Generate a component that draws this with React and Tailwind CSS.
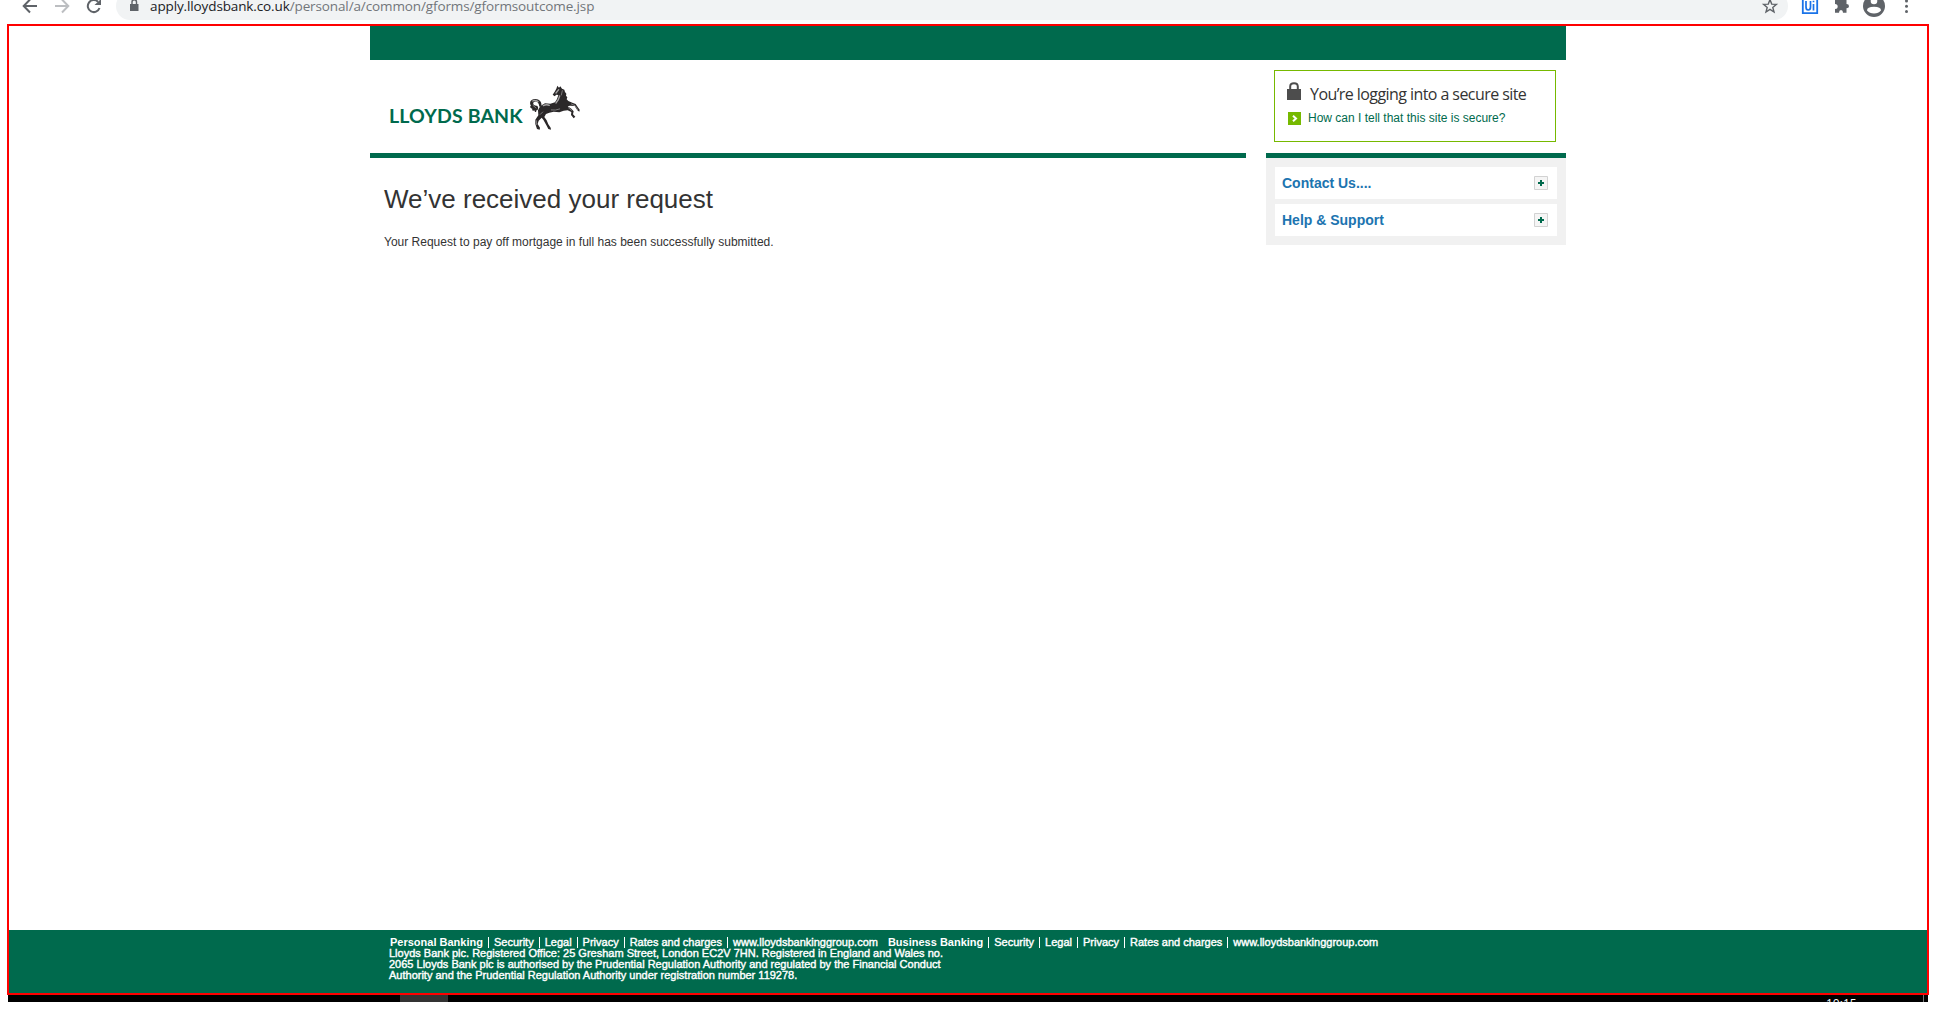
function Horse() {
  return (
    <svg viewBox="0 0 192 162" className="h-[54px] w-[64px]" aria-hidden="true">
      <g fill="#2b2829">
        <path d="M109 26 L112 17 L117 23 L121 19 L126 26 L133 29 L135 36 L139 41 L138 47 L142 52 L140 58 L145 63 L157 68 L167 72 L173 81 L179 89 L178 95 L172 91 L164 78 L150 77 L143 79 L154 86 L161 94 L159 103 L166 110 L161 115 L153 105 L154 96 L143 91 L131 92 L118 97 L101 95 L88 98 L78 102 L73 111 L80 121 L85 133 L92 143 L93 149 L85 147 L80 137 L70 119 L65 113 L56 122 L53 132 L60 143 L59 149 L51 147 L46 132 L46 119 L55 106 L54 91 L61 78 L75 70 L91 71 L105 67 L111 57 L115 45 L109 44 L104 49 L98 44 L104 35 Z" />
        <path d="M64 78 C67 65 56 56 45 57 C31 58 27 68 33 78 C27 79 32 85 37 86 C35 91 40 94 43 91 C44 98 50 98 49 91 C56 91 56 80 51 77 C43 79 37 72 41 67 C47 61 57 65 58 80 Z" />
      </g>
      <g fill="none" stroke="#a5a3a4" strokeLinecap="round">
        <path d="M38 63 Q45 59 54 65 M116 29 L108 39" strokeWidth="4" />
        <path d="M119 48 Q116 61 108 69 M70 77 Q79 72 88 76" strokeWidth="4" />
        <path d="M94 90 Q106 92 119 87 M154 72 L165 77 L173 89 M49 122 L50 134 M61 103 L68 96 M145 83 L155 91" strokeWidth="2" />
        <path d="M127 32 L124 45 M39 76 L48 84" strokeWidth="2" />
      </g>
    </svg>
  );
}

function BrowserBar() {
  return (
    <div className="flex h-6 shrink-0 items-start overflow-hidden">
      <svg className="h-6 w-[116px] shrink-0" viewBox="0 0 116 24" fill="none" strokeWidth="2">
        <path d="M37 6 H24 M30 -0.5 L23.7 6 L30 12.5" stroke="#5f6368" />
        <path d="M55 6 H68 M62 -0.5 L68.3 6 L62 12.5" stroke="#bcbec1" />
        <path d="M99.5 8 A6 6 0 1 1 98 1.8" stroke="#5f6368" />
        <path d="M101 -1 V5 H94.5 Z" fill="#5f6368" />
      </svg>
      <div className="-mt-2 flex h-7 w-[1672px] shrink-0 items-start rounded-full bg-[#f1f3f4] pt-2">
        <svg className="ml-[13px] h-3 w-[11px]" viewBox="0 0 11 12">
          <path d="M1 4 H9.5 V11 H1 Z" fill="#5f6368" />
          <path d="M3 4 V2 A2.2 2.2 0 0 1 7.5 2 V4" fill="none" stroke="#5f6368" strokeWidth="1.4" />
        </svg>
        <div className="ml-[10px] -mt-[3px] whitespace-nowrap font-['Open_Sans','Noto_Sans',sans-serif] text-[13.5px] leading-[19px] tracking-[-0.12px] text-[#72767a]">
          <span className="text-[#202124]">apply.lloydsbank.co.uk</span>/personal/a/common/gforms/gformsoutcome.jsp
        </div>
      </div>
      <svg className="-ml-[28px] h-6 w-[176px] shrink-0" viewBox="1760 0 176 24">
        <path d="M1770 -0.5 L1771.7 4.1 L1776.4 4.4 L1772.8 7.4 L1774 12 L1770 9.4 L1766 12 L1767.2 7.4 L1763.6 4.4 L1768.3 4.1 Z" fill="none" stroke="#5f6368" strokeWidth="1.4" />
        <path d="M1802.8 -3 H1817.2 V13.2 H1802.8 Z" fill="#fff" stroke="#1a73e8" strokeWidth="1.8" />
        <path d="M1806 1 V7 Q1806 10 1808.2 10 Q1810.5 10 1810.5 7 V1 M1813.5 4 V10.5 M1813.5 0.7 V2.2" fill="none" stroke="#1a73e8" strokeWidth="1.7" />
        <path d="M1835 0 H1839 Q1839 -2 1841 -2 Q1843 -2 1843 0 H1846.5 V4 Q1849 4 1849 6.2 Q1849 8.3 1846.5 8.3 V12.7 H1843 Q1843 10 1841 10 Q1839 10 1839 12.7 H1835 V9 Q1837.7 9 1837.7 6.5 Q1837.7 4 1835 4 Z" fill="#5f6368" />
        <circle cx="1874" cy="6" r="11" fill="#5f6368" />
        <circle cx="1874" cy="1" r="3.3" fill="#fff" />
        <path d="M1867 10.5 Q1867 6.8 1874 6.8 Q1881 6.8 1881 10.5 Q1878.5 13.4 1874 13.4 Q1869.5 13.4 1867 10.5" fill="#fff" />
        <g fill="#5f6368"><circle cx="1906.5" cy="1" r="1.5" /><circle cx="1906.5" cy="6.2" r="1.5" /><circle cx="1906.5" cy="11.4" r="1.5" /></g>
      </svg>
    </div>
  );
}

function SecureBox() {
  return (
    <div className="ml-2 h-[72px] w-[282px] border border-[#76b900] pl-3 pt-[11px]">
      <div className="flex h-[18px] items-start">
        <svg className="h-[18px] w-[14px]" viewBox="0 0 14 18">
          <path d="M0 7 H14 V18 H0 Z" fill="#4d4d4d" />
          <path d="M3.2 8 V4.5 Q3.2 1.2 7 1.2 Q10.8 1.2 10.8 4.5 V8" fill="none" stroke="#4d4d4d" strokeWidth="2" />
        </svg>
        <p className="ml-[9px] whitespace-nowrap font-['Open_Sans',sans-serif] text-[16px] leading-6 tracking-[-0.57px] text-[#333]">You’re logging into a secure site</p>
      </div>
      <div className="mt-3 flex h-[13px] items-start">
        <svg className="ml-px h-[13px] w-[13px]" viewBox="0 0 13 13">
          <path d="M0 0 H13 V13 H0 Z" fill="#76b900" />
          <path d="M5 3.8 L8 6.5 L5 9.2" fill="none" stroke="#fff" strokeWidth="2" />
        </svg>
        <a className="-mt-px ml-[7px] whitespace-nowrap text-[12px] leading-[14px] text-[#006a4d]">How can I tell that this site is secure?</a>
      </div>
    </div>
  );
}

function Panel({ title }) {
  return (
    <div className="flex h-8 items-center justify-between bg-white pl-[7px] pr-[9px]">
      <h2 className="text-[14px] font-bold leading-4 text-[#1c74b0]">{title}</h2>
      <svg className="h-[14px] w-[14px]" viewBox="0 0 14 14">
        <path d="M.5 .5 H13.5 V13.5 H.5 Z" fill="#f5f5f5" stroke="#d2d2d2" />
        <path d="M7 4 V10 M4 7 H10" stroke="#006a4d" strokeWidth="2" />
      </svg>
    </div>
  );
}

function FooterLinks({ title }) {
  return (
    <div className="flex items-center">
      <b className="[-webkit-text-stroke:0px]">{title}</b>
      {["Security", "Legal", "Privacy", "Rates and charges", "www.lloydsbankinggroup.com"].map((t) => (
        <span key={t} className="ml-[5px] border-l border-white pl-[5px]">{t}</span>
      ))}
    </div>
  );
}

export default function App() {
  return (
    <div className="flex h-[1019px] w-[1936px] flex-col overflow-hidden bg-white font-['Liberation_Sans',Arial,sans-serif] text-[#333]">
      <BrowserBar />
      <div className="ml-[7px] flex h-[971px] w-[1922px] shrink-0 flex-col border-2 border-[#f00]">
        <div className="ml-[361px] flex w-[1196px] grow flex-col">
          <div className="h-[34px] shrink-0 bg-[#006a4d]" />
          <div className="flex gap-5">
            <main className="w-[876px]">
              <header className="flex h-[98px] items-start border-b-5 border-[#006a4d] pl-5 pt-5">
                <div className="-ml-px mt-[24px] w-[131px] whitespace-nowrap font-['Lato',sans-serif] text-[19.5px] font-bold leading-[24px] tracking-[0.15px] text-[#006a4d]">LLOYDS BANK</div>
                <Horse />
              </header>
              <h1 className="ml-[14px] mt-[26px] text-[26px] leading-[30px]">We’ve received your request</h1>
              <p className="ml-[14px] mt-5 text-[12px] leading-4">Your Request to pay off mortgage in full has been successfully submitted.</p>
            </main>
            <aside className="w-[300px]">
              <div className="h-[98px] border-b-5 border-[#006a4d] pt-[10px]"><SecureBox /></div>
              <div className="flex flex-col gap-[5px] bg-[#f1f1f1] p-[9px]">
                <Panel title="Contact Us...." />
                <Panel title="Help & Support" />
              </div>
            </aside>
          </div>
        </div>
        <footer className="h-[63px] shrink-0 bg-[#006a4d] pl-[380px] pt-[7px] text-[11px] leading-[11px] text-white [-webkit-text-stroke:0.4px_white]">
          <div className="ml-px flex gap-[10px] whitespace-nowrap">
            <FooterLinks title="Personal Banking" />
            <FooterLinks title="Business Banking" />
          </div>
          <p className="w-[600px] whitespace-nowrap">
            Lloyds Bank plc. Registered Office: 25 Gresham Street, London EC2V 7HN. Registered in England and Wales no.<br />
            2065 Lloyds Bank plc is authorised by the Prudential Regulation Authority and regulated by the Financial Conduct<br />
            Authority and the Prudential Regulation Authority under registration number 119278.
          </p>
        </footer>
      </div>
      <div className="ml-2 flex h-[7px] w-[1920px] shrink-0 items-start overflow-hidden bg-black">
        <div className="ml-[392px] h-full w-12 bg-[#333]" />
        <div className="ml-[1378px] mt-[3px] w-[97px] font-['Open_Sans',sans-serif] text-[12px] leading-3 text-white">10:15</div>
        <div className="h-full w-px bg-[#777]" />
      </div>
    </div>
  );
}
